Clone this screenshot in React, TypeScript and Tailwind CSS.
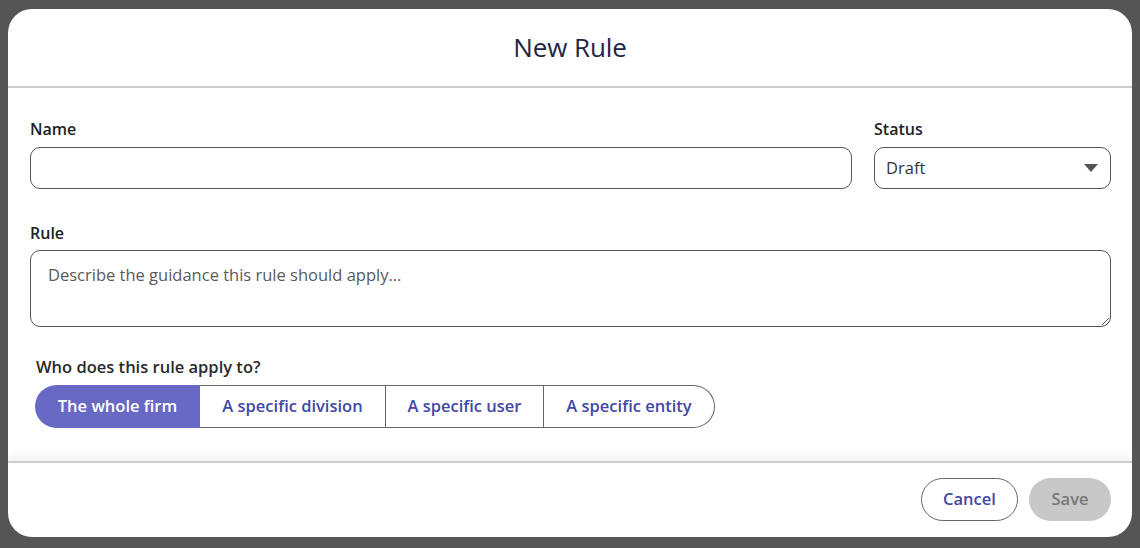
import React from 'react'

const font = { fontFamily: '"Open Sans", "Noto Sans", sans-serif' }

const audiences = [
  { label: 'The whole firm', width: 'w-[165px]' },
  { label: 'A specific division', width: 'w-[186px]' },
  { label: 'A specific user', width: 'w-[158px]' },
  { label: 'A specific entity', width: 'w-[171px]' },
]

export default function App() {
  return (
    <div className="w-[1140px] h-[548px] bg-[#555555] pt-[9px] pl-[8px]" style={font}>
      <div className="w-[1124px] h-[528px] bg-white rounded-[24px] flex flex-col overflow-hidden">
        {/* Header */}
        <div className="h-[79px] flex items-center justify-center border-b-2 border-[#cccccc]">
          <h1 className="text-[26px] text-[#1f2547] tracking-[-0.1px]">New Rule</h1>
        </div>

        {/* Body */}
        <div className="flex-1 pl-[22px] pr-[21px] pt-[29px]">
          <div className="flex gap-[22px]">
            <div className="flex-1 flex flex-col">
              <label className="text-[16px] leading-6 font-semibold text-[#222] mb-[6px]">Name</label>
              <input
                type="text"
                className="h-[42px] border border-[#555] rounded-[10px] px-3 outline-none"
              />
            </div>
            <div className="w-[237px] flex flex-col">
              <label className="text-[16px] leading-6 font-semibold text-[#222] mb-[6px]">Status</label>
              <div className="h-[42px] border border-[#555] rounded-[10px] pl-[11px] pr-[12px] flex items-center justify-between">
                <span className="text-[16.5px] text-[#333]">Draft</span>
                <svg width="14" height="8" viewBox="0 0 14 8">
                  <path d="M0 0 L14 0 L7 8 Z" fill="#555" />
                </svg>
              </div>
            </div>
          </div>

          <div className="flex flex-col mt-[32px]">
            <label className="text-[16px] leading-6 font-semibold text-[#222] mb-[5px]">Rule</label>
            <textarea
              placeholder="Describe the guidance this rule should apply..."
              className="h-[77px] border border-[#555] rounded-[10px] px-[17px] py-[12px] text-[16.5px] text-[#333] placeholder:text-[#5a5a5a] outline-none resize-y"
            />
          </div>

          <div className="mt-[28px] pl-[6px] text-[16.5px] leading-6 font-semibold text-[#2a2a2a]">
            Who does this rule apply to?
          </div>
          {/* Audience segmented control */}
          <div className="mt-[6px] ml-[5px] flex h-[43px] w-fit">
            {audiences.map((a, i) => (
              <button
                key={a.label}
                className={`${a.width} h-full flex items-center justify-center text-[16.5px] font-semibold ${
                  i === 0
                    ? 'bg-[#6869c4] text-white rounded-l-full'
                    : 'text-[#4347a5] border-y border-r border-[#666]'
                } ${i === audiences.length - 1 ? 'rounded-r-full' : ''}`}
              >
                {a.label}
              </button>
            ))}
          </div>
        </div>

        {/* Footer */}
        <div className="h-[76px] border-t-2 border-[#cccccc] shadow-[0_-6px_8px_rgba(0,0,0,0.05)] flex items-center justify-end gap-[11px] pr-[21px] pb-[2px]">
          <button className="w-[97px] h-[43px] rounded-full border border-[#666] text-[16.5px] font-semibold text-[#4347a5]">
            Cancel
          </button>
          <button className="w-[82px] h-[43px] rounded-full bg-[#c8c8c8] text-[16.5px] font-semibold text-[#777]">
            Save
          </button>
        </div>
      </div>
    </div>
  )
}
